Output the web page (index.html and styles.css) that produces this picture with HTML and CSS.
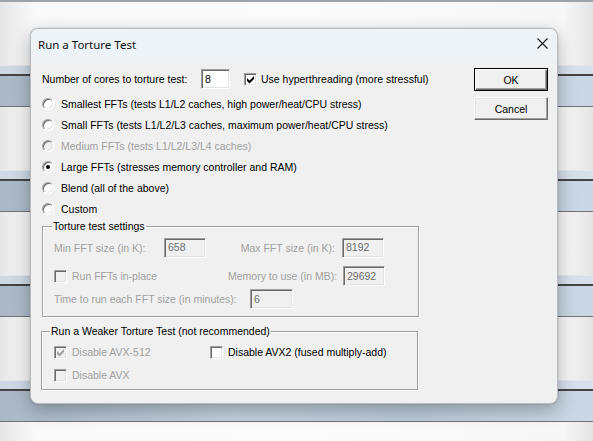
FILE: index.html
```html
<!DOCTYPE html>
<html>
<head>
<meta charset="utf-8">
<link rel="stylesheet" href="styles.css">
</head>
<body>
<div class="desktop">
  <div class="top-line"></div>
  <div class="gap gap-first"></div>
  <div class="band"><div class="b-light"></div><div class="b-pale"></div><div class="b-dark"></div><div class="b-blue"></div><div class="b-edge"></div></div>
  <div class="gap"></div>
  <div class="band"><div class="b-light"></div><div class="b-pale"></div><div class="b-dark"></div><div class="b-blue"></div><div class="b-edge"></div></div>
  <div class="gap"></div>
  <div class="band"><div class="b-light"></div><div class="b-pale"></div><div class="b-dark"></div><div class="b-blue"></div><div class="b-edge"></div></div>
  <div class="gap"></div>
  <div class="band"><div class="b-light"></div><div class="b-pale"></div><div class="b-dark"></div><div class="b-blue"></div><div class="b-edge"></div></div>
  <div class="gap gap-last"></div>
</div>

<div class="dialog">
  <div class="titlebar">
    <span class="title">Run a Torture Test</span>
    <svg class="close" width="11" height="11" viewBox="0 0 11 11"><path d="M0.5 0.5 L10.5 10.5 M10.5 0.5 L0.5 10.5" stroke="#1a1a1a" stroke-width="1.1" fill="none"/></svg>
  </div>
  <div class="body">
    <div class="main">
      <div class="row row-cores">
        <span class="lbl-cores">Number of cores to torture test:</span>
        <span class="edit edit-cores">8</span>
        <span class="chk checked"><svg width="13" height="13" viewBox="0 0 13 13"><path d="M3 5 L5.5 7.5 L10 3 L10 6 L5.5 10.5 L3 8 Z" fill="#000"/></svg></span>
        <span class="chk-lbl">Use hyperthreading (more stressful)</span>
      </div>
      <div class="radios">
        <div class="radio-row"><span class="radio"></span><span>Smallest FFTs (tests L1/L2 caches, high power/heat/CPU stress)</span></div>
        <div class="radio-row"><span class="radio"></span><span>Small FFTs (tests L1/L2/L3 caches, maximum power/heat/CPU stress)</span></div>
        <div class="radio-row disabled"><span class="radio"></span><span>Medium FFTs (tests L1/L2/L3/L4 caches)</span></div>
        <div class="radio-row"><span class="radio selected"></span><span>Large FFTs (stresses memory controller and RAM)</span></div>
        <div class="radio-row"><span class="radio"></span><span>Blend (all of the above)</span></div>
        <div class="radio-row"><span class="radio"></span><span>Custom</span></div>
      </div>

      <fieldset class="group group-settings">
        <legend>Torture test settings</legend>
        <div class="grow grow-a">
          <span class="dis c-min">Min FFT size (in K):</span>
          <span class="edit disabled-edit w42">658</span>
          <span class="dis c-max">Max FFT size (in K):</span>
          <span class="edit disabled-edit w42">8192</span>
        </div>
        <div class="grow grow-b">
          <span class="c-inplace"><span class="chk dchk"></span><span class="dis">Run FFTs in-place</span></span>
          <span class="dis c-mem">Memory to use (in MB):</span>
          <span class="edit disabled-edit w42">29692</span>
        </div>
        <div class="grow grow-c">
          <span class="dis c-time">Time to run each FFT size (in minutes):</span>
          <span class="edit disabled-edit w43">6</span>
        </div>
      </fieldset>

      <fieldset class="group group-weak">
        <legend>Run a Weaker Torture Test (not recommended)</legend>
        <div class="wrow wrow-a">
          <span class="c-avx512"><span class="chk dchk"><svg width="13" height="13" viewBox="0 0 13 13"><path d="M3 5 L5.5 7.5 L10 3 L10 6 L5.5 10.5 L3 8 Z" fill="#a0a0a0"/></svg></span><span class="dis">Disable AVX-512</span></span>
          <span class="c-avx2"><span class="chk"></span><span>Disable AVX2 (fused multiply-add)</span></span>
        </div>
        <div class="wrow wrow-b">
          <span class="c-avx512"><span class="chk dchk"></span><span class="dis">Disable AVX</span></span>
        </div>
      </fieldset>
    </div>
    <div class="buttons">
      <div class="btn btn-default"><span>OK</span></div>
      <div class="btn"><span>Cancel</span></div>
    </div>
  </div>
</div>
</body>
</html>
```

FILE: styles.css
```css
* { box-sizing: border-box; }
html, body { margin: 0; padding: 0; }
body {
  width: 593px;
  height: 441px;
  overflow: hidden;
  position: relative;
  background: #f6f6f6;
  font-family: "Liberation Sans", Arial, sans-serif;
  font-size: 10.5px;
  color: #000;
}

/* ---------- desktop background ---------- */
.desktop { display: flex; flex-direction: column; height: 441px; overflow: hidden; }
.top-line { height: 2px; flex: none; background: #9da3aa; }
.gap {
  height: 63px;
  flex: none;
  background: linear-gradient(to right, #e6e6e6 0, #f9f9f9 35px, #fbfbfb 50%, #f7f7f7 calc(100% - 30px), #e4e4e4 100%);
}
.gap-first { height: 63px; }
.gap-last { height: 34px; }
.band { display: flex; flex-direction: column; flex: none; }
.b-light { height: 1px; background: #e4e8ec; }
.b-pale { height: 8px; background: linear-gradient(to right, #cdd8e4, #d6e0eb); }
.b-dark { height: 2px; background: #424446; }
.b-blue { height: 30px; background: linear-gradient(100deg, #a9b7c6 0%, #c3d0de 40%, #bccad9 70%, #cbd7e4 100%); }
.b-edge { height: 1px; background: #707275; }

/* ---------- dialog window ---------- */
.dialog {
  position: absolute;
  left: 30px;
  top: 28px;
  width: 528px;
  height: 376px;
  background: #f0f0f0;
  border: 1px solid #b9bcc0;
  border-radius: 8px;
  overflow: hidden;
  box-shadow: 0 6px 18px rgba(0, 0, 0, 0.28), 0 0 2px rgba(0, 0, 0, 0.2);
  display: flex;
  flex-direction: column;
}
.titlebar {
  height: 29px;
  background: #eef3f8;
  display: flex;
  align-items: center;
  justify-content: space-between;
  padding: 0 9px 0 7px;
}
.title {
  font-family: "Noto Sans", "Open Sans", sans-serif;
  font-size: 11.5px;
  color: #111;
  padding-top: 1px;
}
.close { display: block; }

.body {
  flex: 1;
  display: flex;
  padding: 10px 0 0 11px;
}
.main { width: 432px; display: flex; flex-direction: column; }

/* ---------- common controls ---------- */
.edit {
  display: inline-flex;
  align-items: center;
  height: 20px;
  padding: 0 0 0 3px;
  background: #fff;
  border: 1px solid;
  border-color: #a0a0a0 #fff #fff #a0a0a0;
  box-shadow: inset 1px 1px 0 #696969, inset -1px -1px 0 #e3e3e3;
  line-height: 1;
}
.disabled-edit { background: #f0f0f0; color: #6d6d6d; }
.w42 { width: 42px; }
.w43 { width: 43px; }

.chk {
  display: inline-block;
  width: 13px;
  height: 13px;
  flex: none;
  background: #fff;
  border: 1px solid;
  border-color: #a0a0a0 #fff #fff #a0a0a0;
  box-shadow: inset 1px 1px 0 #696969, inset -1px -1px 0 #e3e3e3;
  position: relative;
}
.chk svg { position: absolute; left: -1px; top: -1px; }
.dchk { background: #f0f0f0; }

.radio {
  width: 12px;
  height: 12px;
  flex: none;
  border-radius: 50%;
  background: #fff;
  border: 1px solid;
  border-color: #a0a0a0 #fff #fff #a0a0a0;
  box-shadow: inset 1px 1px 0 #696969, inset -1px -1px 0 #e3e3e3;
  display: flex;
  align-items: center;
  justify-content: center;
}
.radio.selected::after {
  content: "";
  width: 4px;
  height: 4px;
  border-radius: 50%;
  background: #000;
}
.disabled { color: #a0a0a0; }
.disabled .radio { background: #f0f0f0; }
.dis { color: #a0a0a0; }

/* ---------- first row ---------- */
.row-cores { height: 22px; display: flex; align-items: center; }
.lbl-cores { width: 159px; }
.edit-cores { width: 29px; height: 20px; }
.row-cores .chk { margin-left: 14px; }
.chk-lbl { margin-left: 4px; }

/* ---------- radios ---------- */
.radios { margin-top: 3px; display: flex; flex-direction: column; }
.radio-row { height: 21px; display: flex; align-items: center; gap: 7px; }

/* ---------- group boxes ---------- */
.group {
  margin: 0;
  padding: 0;
  width: 377px;
  border: 1px solid #a0a0a0;
  box-shadow: inset 1px 1px 0 #fff, 1px 1px 0 #fff;
  min-width: 0;
}
.group legend {
  margin-left: 9px;
  padding: 0 1px;
  line-height: 13px;
  background: #f0f0f0;
  color: #000;
}
.group-settings { margin-top: 1px; height: 97px; }
.group-weak { margin-top: 8px; height: 65px; margin-left: -1px; }
.group-weak legend { margin-left: 8px; }

.grow { display: flex; align-items: center; padding-left: 11px; }
.grow-a { margin-top: 4px; height: 21px; }
.grow-b { margin-top: 8px; height: 20px; }
.grow-c { margin-top: 3px; height: 20px; }
.c-min { width: 110px; }
.c-max { width: 136px; text-align: right; padding-right: 7px; }
.c-inplace { width: 174px; display: flex; align-items: center; gap: 5px; }
.c-mem { width: 115px; }
.c-time { width: 196px; }

.wrow { display: flex; align-items: center; padding-left: 12px; height: 20px; }
.wrow-a { margin-top: 4px; }
.wrow-b { margin-top: 3px; }
.c-avx512 { width: 156px; display: flex; align-items: center; gap: 5px; }
.c-avx2 { display: flex; align-items: center; gap: 5px; }

/* ---------- buttons ---------- */
.buttons { display: flex; flex-direction: column; gap: 6px; }
.btn {
  width: 74px;
  height: 23px;
  background: #f0f0f0;
  border: 1px solid;
  border-color: #fff #696969 #696969 #fff;
  box-shadow: inset -1px -1px 0 #a0a0a0, inset 1px 1px 0 #e3e3e3;
  display: flex;
  align-items: center;
  justify-content: center;
}
.btn-default {
  border-color: #000;
  box-shadow: inset 1px 1px 0 #fff, inset -1px -1px 0 #696969, inset -2px -2px 0 #a0a0a0;
}
```
